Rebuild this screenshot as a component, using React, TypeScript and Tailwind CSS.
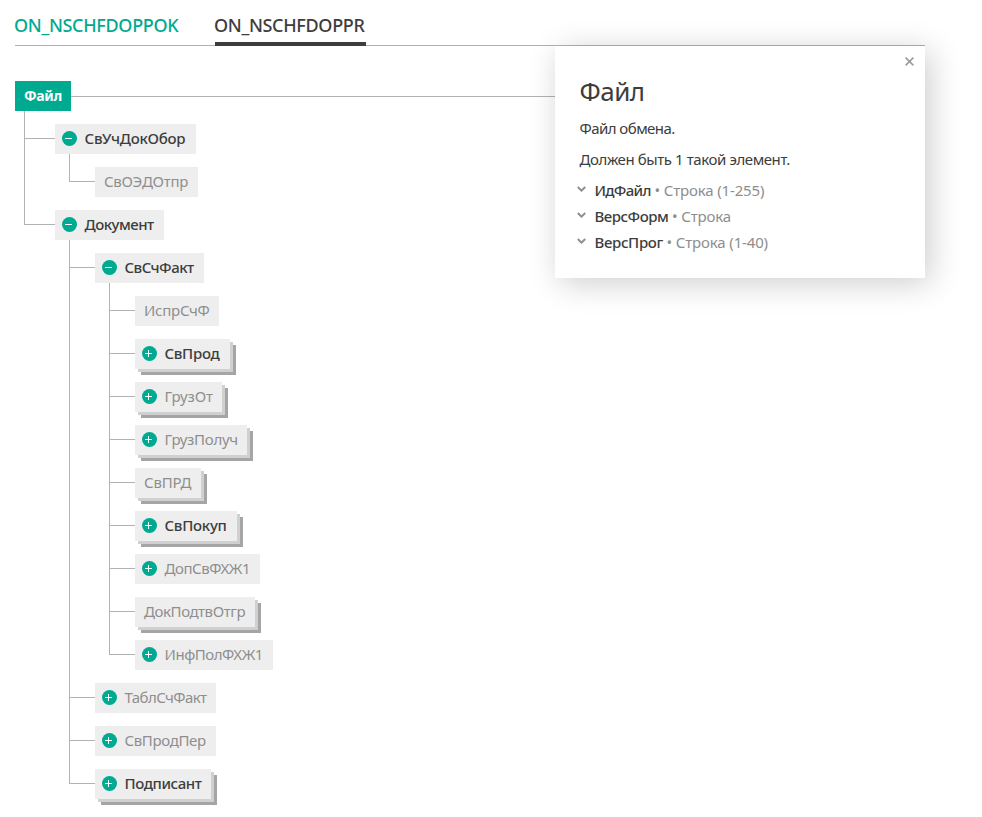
import React from "react";

type TreeNode = {
  name: string;
  width: string;
  tracking: string;
  required?: boolean;
  multiple?: boolean;
  state?: "open" | "closed";
  children?: TreeNode[];
};

const tree: TreeNode[] = [
  {
    name: "СвУчДокОбор", width: "w-[141px]", tracking: "tracking-[-0.22px]", required: true, state: "open",
    children: [{ name: "СвОЭДОтпр", width: "w-[103px]", tracking: "tracking-[-0.25px]" }],
  },
  {
    name: "Документ", width: "w-[109px]", tracking: "tracking-[-0.5px]", required: true, state: "open",
    children: [
      {
        name: "СвСчФакт", width: "w-[109px]", tracking: "tracking-[-0.5px]", required: true, state: "open",
        children: [
          { name: "ИспрСчФ", width: "w-[84px]", tracking: "tracking-[-0.25px]" },
          { name: "СвПрод", width: "w-[95px]", tracking: "tracking-[-0.3px]", required: true, multiple: true, state: "closed" },
          { name: "ГрузОт", width: "w-[87px]", tracking: "tracking-[-0.15px]", multiple: true, state: "closed" },
          { name: "ГрузПолуч", width: "w-[112px]", tracking: "tracking-[-0.3px]", multiple: true, state: "closed" },
          { name: "СвПРД", width: "w-[66px]", tracking: "tracking-[-0.2px]", multiple: true },
          { name: "СвПокуп", width: "w-[102px]", tracking: "tracking-[-0.25px]", required: true, multiple: true, state: "closed" },
          { name: "ДопСвФХЖ1", width: "w-[125px]", tracking: "tracking-[-0.45px]", state: "closed" },
          { name: "ДокПодтвОтгр", width: "w-[120px]", tracking: "tracking-[-0.4px]", multiple: true },
          { name: "ИнфПолФХЖ1", width: "w-[138px]", tracking: "tracking-[-0.45px]", state: "closed" },
        ],
      },
      { name: "ТаблСчФакт", width: "w-[121px]", tracking: "tracking-[-0.55px]", state: "closed" },
      { name: "СвПродПер", width: "w-[121px]", tracking: "tracking-[-0.35px]", state: "closed" },
      { name: "Подписант", width: "w-[116px]", tracking: "tracking-[-0.4px]", required: true, multiple: true, state: "closed" },
    ],
  },
];

function Toggle({ open }: { open: boolean }) {
  return (
    <svg className="mr-[7.5px] mt-[7px] h-[15px] w-[15px] shrink-0" viewBox="0 0 15 15">
      <circle cx="7.5" cy="7.5" r="7.5" fill="#00aa90" />
      <path d={open ? "M3 7.5h7" : "M3 7.5h7M6.5 4v7"} stroke="#fff" fill="none" shapeRendering="crispEdges" />
    </svg>
  );
}

function Branch({ nodes, root = false }: { nodes: TreeNode[]; root?: boolean }) {
  return (
    <ul className={root ? "ml-[9px]" : "ml-[14px]"}>
      {nodes.map((node, i) => (
        <li key={node.name} className="flex">
          <div className={`flex shrink-0 flex-col ${root ? "w-[31px]" : "w-[26px]"}`}>
            <div className="h-7 shrink-0 border-b border-l border-[#b0b2b4]" />
            {i < nodes.length - 1 && <div className="flex-1 border-l border-[#b0b2b4]" />}
          </div>
          <div className="pt-[13px]">
            <div
              className={`flex h-[30px] items-start whitespace-nowrap bg-[#eee] text-[15px] leading-[28px] ${node.width} ${
                node.state ? "pl-[7px]" : "pl-[9px]"
              } ${node.required ? "font-medium text-[#3d3d3d]" : "text-[#8e8e8e]"} ${
                node.multiple ? "shadow-[3px_3px_0_#d0d0d0,6px_6px_0_#a5a5a5]" : ""
              }`}
            >
              {node.state && <Toggle open={node.state === "open"} />}
              <span className={node.tracking}>{node.name}</span>
            </div>
            {node.children && <Branch nodes={node.children} />}
          </div>
        </li>
      ))}
    </ul>
  );
}

const attributes = [
  { name: "ИдФайл", tracking: "tracking-[-0.7px]", type: "Строка (1-255)" },
  { name: "ВерсФорм", tracking: "tracking-[-0.5px]", type: "Строка" },
  { name: "ВерсПрог", tracking: "tracking-[-0.35px]", type: "Строка (1-40)" },
];

export default function App() {
  return (
    <div className="h-[817px] w-[982px] overflow-hidden bg-white pl-[15px] font-['Noto_Sans',sans-serif] text-[15px] text-[#3d3d3d]">
      <nav className="flex h-[46px] w-[910px] gap-9 border-b border-[#b0b2b4] text-[18px] font-medium tracking-[-0.33px]">
        <a className="-ml-px mr-px h-[46px] w-[164px] pt-[12px] leading-[26px] text-[#00aa90]">ON_NSCHFDOPPOK</a>
        <a className="h-[46px] w-[151px] border-b-4 border-[#3d3d3d] pt-[12px] -indent-px leading-[26px]">ON_NSCHFDOPPR</a>
      </nav>
      <main className="flex w-[910px] items-start">
        <section className="w-[540px] pt-[35px]">
          <div className="flex items-start">
            <div className="h-[30px] w-14 bg-[#00aa90] pl-[9px] text-[14px] font-bold leading-[29px] tracking-[-0.3px] text-white">Файл</div>
            <div className="mt-[15px] h-px flex-1 bg-[#b0b2b4]" />
          </div>
          <Branch nodes={tree} root />
        </section>
        <aside className="h-[232px] w-[370px] bg-white pl-[24.5px] shadow-[5px_5px_30px_rgba(0,0,0,0.2)]">
          <div className="flex h-[30px] justify-end pr-[11px] pt-[11px]">
            <svg className="h-[9px] w-[9px]" viewBox="0 0 9 9">
              <path d="M.6.6l7.8 7.8M8.4.6L.6 8.4" stroke="#999" strokeWidth="1.5" />
            </svg>
          </div>
          <h1 className="-mt-[2px] text-[26px] leading-[34px] tracking-[-0.5px]">Файл</h1>
          <p className="mt-[9px] leading-[22px] tracking-[-0.55px]">Файл обмена.</p>
          <p className="mt-[9px] leading-[22px] tracking-[-0.41px]">Должен быть 1 такой элемент.</p>
          <ul className="-ml-[2.5px] mt-[7px]">
            {attributes.map((a) => (
              <li key={a.name} className="flex h-[26px] items-center whitespace-pre leading-[26px]">
                <svg className="mb-[2px] mr-[8.5px] h-[6px] w-[9px]" viewBox="0 0 9 6">
                  <path d="M.8 1l3.7 3.6L8.2 1" fill="none" stroke="#8e8e8e" strokeWidth="2" />
                </svg>
                <b className={`font-medium ${a.tracking}`}>{a.name}</b>
                <span className="tracking-[-0.15px] text-[#8e8e8e]"> • {a.type}</span>
              </li>
            ))}
          </ul>
        </aside>
      </main>
    </div>
  );
}
